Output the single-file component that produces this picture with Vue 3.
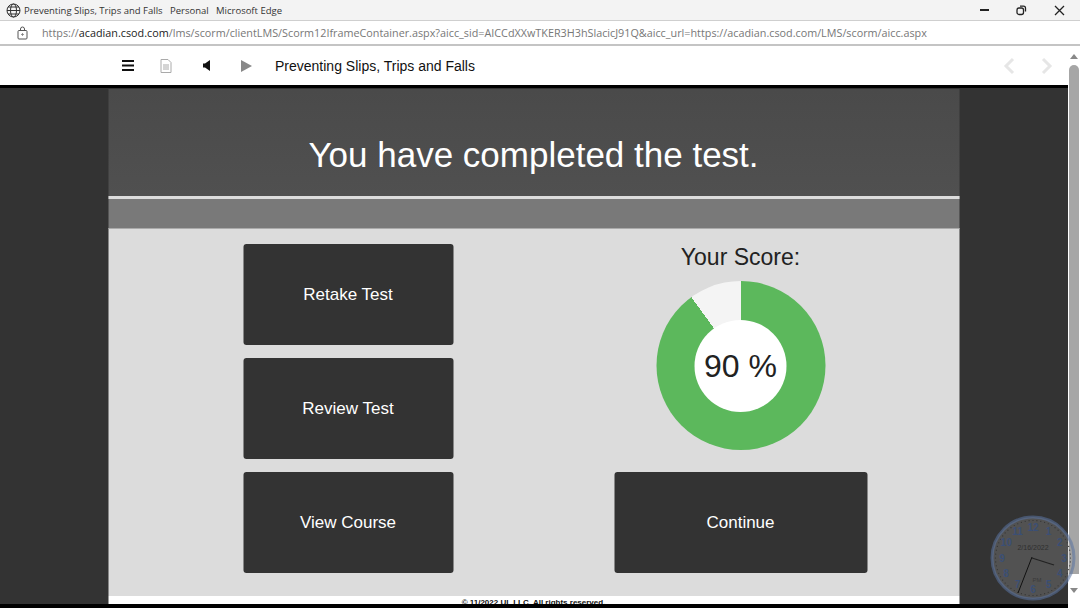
<template>
  <div class="window">
    <!-- window title bar -->
    <div class="titlebar">
      <svg class="globe" width="15" height="15" viewBox="0 0 15 15">
        <circle cx="7.5" cy="7.5" r="6.5" />
        <ellipse cx="7.5" cy="7.5" rx="3" ry="6.5" />
        <path d="M1 7.5h13M2 4h11M2 11h11" />
      </svg>
      <span class="title-text">Preventing Slips, Trips and Falls&nbsp;&nbsp; Personal &nbsp;&nbsp;Microsoft Edge</span>
      <div class="win-controls">
        <span class="win-min"></span>
        <svg width="11" height="11" viewBox="0 0 11 11" class="win-restore">
          <rect x="1" y="3" width="6.5" height="6.5" rx="2" />
          <path d="M4 1.2h3.5a2 2 0 0 1 2 2v3.300" />
        </svg>
        <svg width="11" height="11" viewBox="0 0 11 11" class="win-close">
          <path d="M1 1l9 9M10 1l-9 9" />
        </svg>
      </div>
    </div>

    <!-- address bar -->
    <div class="addressbar">
      <svg class="lock" width="11" height="14" viewBox="0 0 11 14">
        <rect x="1" y="4.500" width="9" height="8.500" rx="1" />
        <path d="M3.500 4.500V3a2 2 0 0 1 4 0v1.500" />
        <circle cx="5.500" cy="8.500" r="0.700" />
      </svg>
      <span class="url">https://<b>acadian.csod.com</b>/lms/scorm/clientLMS/Scorm12IframeContainer.aspx?aicc_sid=AICCdXXwTKER3H3hSlacicJ91Q&amp;aicc_url=https://acadian.csod.com/LMS/scorm/aicc.aspx</span>
    </div>

    <div class="viewport">
      <div class="page">
        <!-- course toolbar -->
        <div class="toolbar">
          <div class="tool-icons">
            <svg width="12" height="11" viewBox="0 0 12 11" class="tool-menu">
              <path d="M0 1h12M0 5.500h12M0 10h12" />
            </svg>
            <svg width="12" height="14" viewBox="0 0 12 14" class="tool-doc">
              <path d="M1 .5h7l3 3v10H1z" />
              <path d="M3 6h6M3 8h6M3 10h6" />
            </svg>
            <svg width="9" height="11" viewBox="0 0 9 11" class="tool-prev">
              <path d="M8 0v11L3 7.500H1v-4h2z" />
            </svg>
            <svg width="11" height="12" viewBox="0 0 11 12" class="tool-next">
              <path d="M0 0l11 6-11 6z" />
            </svg>
          </div>
          <span class="course-title">Preventing Slips, Trips and Falls</span>
          <div class="pager">
            <svg width="12" height="18" viewBox="0 0 12 18"><path d="M10 2L3 9l7 7" /></svg>
            <svg width="12" height="18" viewBox="0 0 12 18"><path d="M2 2l7 7-7 7" /></svg>
          </div>
        </div>

        <!-- slide -->
        <div class="stage">
          <div class="slide">
            <div class="slide-head">
              <h1>You have completed the test.</h1>
            </div>
            <div class="slide-band"></div>
            <div class="slide-body">
              <div class="actions">
                <button v-for="b in buttons" :key="b" class="btn">{{ b }}</button>
              </div>
              <div class="result">
                <div class="score-label">Your Score:</div>
                <div class="donut" :style="{ background: donutBg }">
                  <div class="donut-hole">{{ score }} %</div>
                </div>
                <button class="btn btn-wide">Continue</button>
              </div>
            </div>
            <div class="slide-foot">
              <span>© 11/2022 UL LLC. All rights reserved.</span>
            </div>
          </div>
        </div>
      </div>

      <!-- scrollbar -->
      <div class="scrollbar">
        <span class="arrow-up"></span>
        <div class="thumb"></div>
        <span class="arrow-down"></span>
      </div>
    </div>

    <!-- desktop clock gadget on top of everything -->
    <svg class="clock" width="90" height="90" viewBox="0 0 90 90">
      <circle cx="45" cy="45" r="41" class="clock-face" />
      <circle v-for="t in ticks" :key="t.i" :cx="t.x" :cy="t.y" r="0.600" class="clock-tick" />
      <text v-for="n in numerals" :key="n.v" :x="n.x" :y="n.y" class="clock-num">{{ n.v }}</text>
      <text x="45" y="37" class="clock-date">2/16/2022</text>
      <text x="49" y="69" class="clock-ampm">PM</text>
      <path d="M44 45L66 52" class="clock-hour" />
      <path d="M44 44L30 80" class="clock-minute" />
    </svg>
  </div>
</template>

<script setup>
const buttons = ['Retake Test', 'Review Test', 'View Course']
const score = 90
const donutBg = `conic-gradient(#5cb85c 0 ${score * 3.6}deg, #f4f4f4 ${score * 3.6}deg 360deg)`

const numerals = Array.from({ length: 12 }, (_, i) => {
  const a = ((i + 1) * Math.PI) / 6
  return { v: i + 1, x: 45 + Math.sin(a) * 31, y: 48.5 - Math.cos(a) * 31 }
})
const ticks = Array.from({ length: 60 }, (_, i) => {
  const a = (i * Math.PI) / 30
  return { i, x: 45 + Math.sin(a) * 37.5, y: 45 - Math.cos(a) * 37.5 }
})
</script>

<style>
html,
body {
  margin: 0;
  overflow: hidden;
  background: #fff;
}
</style>

<style scoped>
.window {
  position: relative;
  width: 1080px;
  height: 608px;
  overflow: hidden;
  display: flex;
  flex-direction: column;
  font-family: 'Liberation Sans', Arial, sans-serif;
  background: #fff;
}

.titlebar {
  flex: 0 0 20px;
  display: flex;
  align-items: center;
  padding-left: 6px;
  background: #f3f3f3;
  color: #333;
  font-family: 'Open Sans', sans-serif;
  font-size: 9.500px;
}
.globe {
  fill: none;
  stroke: #333;
  stroke-width: 1;
  margin-right: 3px;
}
.title-text {
  white-space: nowrap;
}
.win-controls {
  margin-left: auto;
  display: flex;
  align-items: center;
  gap: 27px;
  padding-right: 15px;
}
.win-min {
  width: 9px;
  height: 2px;
  background: #222;
}
.win-controls svg {
  fill: none;
  stroke: #222;
  stroke-width: 1.300;
}

.addressbar {
  flex: 0 0 26px;
  box-sizing: border-box;
  display: flex;
  align-items: center;
  padding-left: 17px;
  border-top: 1px solid #cfcfcf;
  border-bottom: 2px solid #c4c4c4;
  background: #fff;
  color: #777;
  font-family: 'Open Sans', sans-serif;
  font-size: 10.800px;
}
.lock {
  fill: none;
  stroke: #555;
  stroke-width: 1;
  margin-right: 14px;
}
.url {
  white-space: nowrap;
}
.url b {
  font-weight: 400;
  color: #222;
}

.viewport {
  flex: 1;
  display: flex;
  min-height: 0;
}
.page {
  flex: 1;
  display: flex;
  flex-direction: column;
  min-width: 0;
}

.toolbar {
  flex: 0 0 39px;
  display: flex;
  align-items: center;
  padding-left: 122px;
  background: #fff;
}
.tool-icons {
  display: flex;
  align-items: center;
  width: 153px;
}
.tool-menu {
  fill: none;
  stroke: #111;
  stroke-width: 2;
  margin-right: 26px;
}
.tool-doc {
  fill: none;
  stroke: #aaa;
  stroke-width: 1;
  margin-right: 30px;
}
.tool-prev {
  fill: #111;
  margin-right: 30px;
}
.tool-next {
  fill: #888;
}
.course-title {
  font-size: 14px;
  color: #111;
}
.pager {
  margin-left: auto;
  display: flex;
  gap: 26px;
  padding-right: 15px;
}
.pager svg {
  fill: none;
  stroke: #e6e6e6;
  stroke-width: 3;
}

.stage {
  flex: 1;
  min-height: 0;
  box-sizing: border-box;
  display: flex;
  justify-content: center;
  background: #333;
  border-top: 3px solid #000;
  border-bottom: 4px solid #000;
  padding: 1px 1px 0 0;
}
.slide {
  width: 851px;
  display: flex;
  flex-direction: column;
  margin-right: -1px;
  transform: translateX(-0.500px);
}

.slide-head {
  flex: 0 0 107px;
  display: flex;
  align-items: center;
  justify-content: center;
  padding-top: 24px;
  box-sizing: border-box;
  background: linear-gradient(#4a4a4a, #505050);
}
.slide-head h1 {
  margin: 0;
  color: #fff;
  font-size: 35px;
  font-weight: 400;
}
.slide-band {
  flex: 0 0 29px;
  border-top: 3px solid #dcdcdc;
  background: #797979;
}
.slide-body {
  flex: 1;
  min-height: 0;
  display: flex;
  gap: 161px;
  padding: 15px 0 0 135px;
  background: #dcdcdc;
  border-top: 1px solid #aaa;
}
.actions {
  width: 210px;
  display: flex;
  flex-direction: column;
  gap: 13px;
}
.btn {
  height: 101px;
  padding: 0;
  border: 0;
  border-radius: 3px;
  background: #333;
  color: #fff;
  font-family: 'Liberation Sans', Arial, sans-serif;
  font-size: 17px;
}
.result {
  width: 253px;
  display: flex;
  flex-direction: column;
  align-items: center;
}
.score-label {
  font-size: 23px;
  line-height: 26px;
  color: #222;
  margin-bottom: 11px;
}
.donut {
  width: 169px;
  height: 169px;
  border-radius: 50%;
  display: flex;
  align-items: center;
  justify-content: center;
}
.donut-hole {
  width: 92px;
  height: 92px;
  border-radius: 50%;
  background: #fff;
  color: #222;
  font-size: 32px;
  line-height: 92px;
  text-align: center;
}
.btn-wide {
  flex: 0 0 101px;
  width: 253px;
  margin-top: 22px;
}
.slide-foot {
  flex: 0 0 8px;
  overflow: hidden;
  background: #fff;
  text-align: center;
  color: #111;
  font-size: 8px;
  font-weight: 700;
  line-height: 14px;
}

.scrollbar {
  flex: 0 0 12px;
  display: flex;
  flex-direction: column;
  align-items: center;
  background: #fff;
  padding-top: 8px;
  box-sizing: border-box;
}
.arrow-up,
.arrow-down {
  width: 0;
  height: 0;
  border-left: 4px solid transparent;
  border-right: 4px solid transparent;
}
.arrow-up {
  border-bottom: 5px solid #888;
}
.arrow-down {
  margin-top: 14px;
  border-top: 5px solid #888;
}
.thumb {
  width: 10px;
  height: 509px;
  margin-top: 6px;
  background: #a6a6a6;
  border-radius: 5px 5px 0 0;
}

.clock {
  position: absolute;
  left: 988px;
  top: 513px;
}
.clock-face {
  fill: rgba(150, 150, 150, 0.32);
  stroke: rgba(90, 115, 160, 0.55);
  stroke-width: 3;
}
.clock-tick {
  fill: #333;
}
.clock-num {
  fill: #3b4f75;
  font-size: 10px;
  font-weight: 700;
  text-anchor: middle;
}
.clock-date {
  fill: #2f2f2f;
  font-size: 7px;
  text-anchor: middle;
}
.clock-ampm {
  fill: #3a3a3a;
  font-size: 6px;
  text-anchor: middle;
}
.clock-hour {
  stroke: #222;
  stroke-width: 1.300;
}
.clock-minute {
  stroke: #111;
  stroke-width: 1;
}
</style>
